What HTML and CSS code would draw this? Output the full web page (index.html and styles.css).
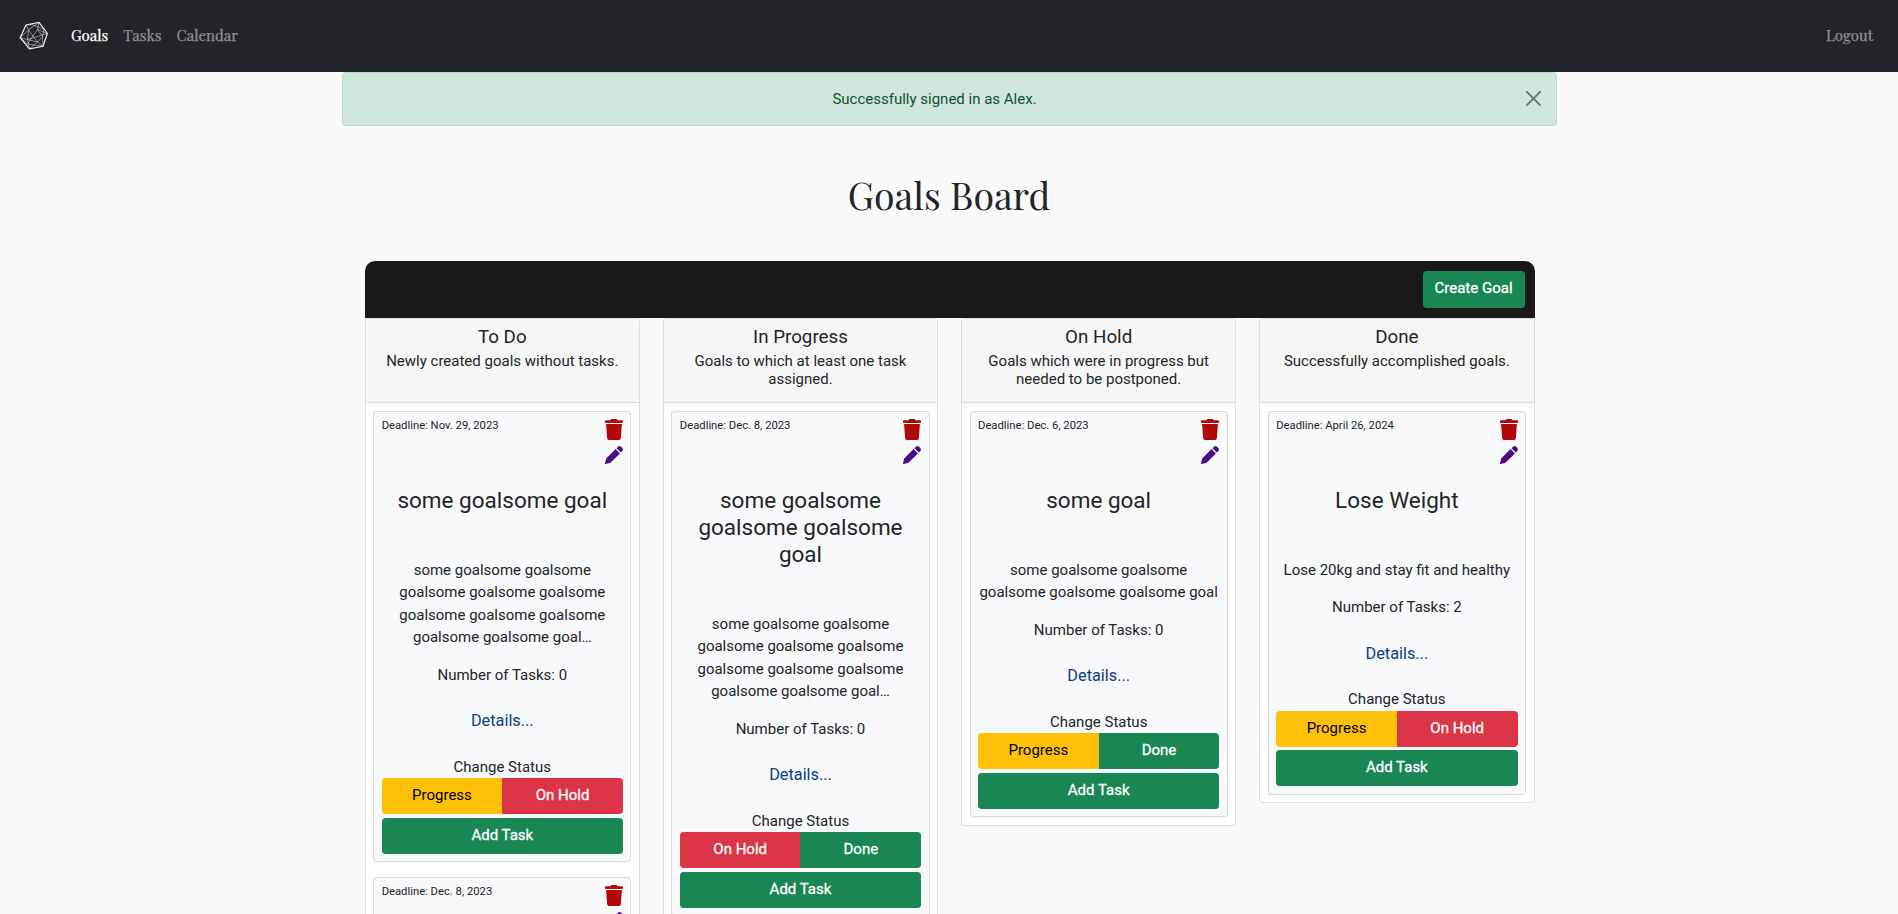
FILE: index.html
```html
<!DOCTYPE html>
<html lang="en">
<head>
<meta charset="utf-8">
<title>Goals Board</title>
<link rel="stylesheet" href="styles.css">
</head>
<body>
<svg class="sprite" aria-hidden="true">
  <symbol id="trash" viewBox="0 0 18 21"><path d="M0 1.9Q0 1.3.6 1.3H5.2L6 .4Q6.2.1 6.6.1H11.4Q11.8.1 12 .4L12.8 1.3H17.4Q18 1.3 18 1.9V3.2Q18 3.9 17.4 3.9H.6Q0 3.9 0 3.2ZM1.1 5.1H16.9L15.9 19.1Q15.7 21 14 21H4Q2.3 21 2.1 19.1Z"/></symbol>
  <symbol id="pencil" viewBox="0 0 18 18"><path d="M10.6 3.1 14.9 7.4 6 16.2Q5.5 16.7 4.8 16.9L.6 18Q-.1 18.1 0 17.4L1 13.2Q1.2 12.5 1.7 12ZM11.5 2.2 13 .7Q14.5-.6 16 .7L17.3 2Q18.6 3.5 17.3 5L15.8 6.5Z"/></symbol>
</svg>
<nav class="navbar">
  <svg class="logo" viewBox="0 0 30 30" fill="none" stroke="#f2f2f2">
    <path stroke-width="1.15" d="M7 4 20 1.5 28.4 12.5 24 25.3 10.5 27.8 1.2 16.7Z"/>
    <path stroke-width=".7" opacity=".7" d="M7 4 13 3.5 25 8.5 23.5 15.5 24 25.3M20 1.5 9.5 9 1.2 16.7 8.5 18.5 10.5 27.8M7 4 9.5 9 8.5 18.5 18.5 21 23.5 15.5 18.5 8.5M20 1.5 18.5 8.5 28.4 12.5 8.5 18.5M18.5 21 24 25.3 8.5 23 1.2 16.7M9.5 9 18.5 21 10.5 27.8M18.5 8.5 8.5 23"/>
  </svg>
  <a class="nav-link active">Goals</a>
  <a class="nav-link">Tasks</a>
  <a class="nav-link">Calendar</a>
  <a class="nav-link logout">Logout</a>
</nav>
<div class="alert">
  <span class="alert-text">Successfully signed in as Alex.</span>
  <svg class="close" viewBox="0 0 16 16"><path d="M.3.3a1 1 0 0 1 1.4 0L8 6.6 14.3.3a1 1 0 1 1 1.4 1.4L9.4 8l6.3 6.3a1 1 0 0 1-1.4 1.4L8 9.4l-6.3 6.3a1 1 0 0 1-1.4-1.4L6.6 8 .3 1.7a1 1 0 0 1 0-1.4z"/></svg>
</div>
<h1 class="title">Goals Board</h1>
<main class="board">
  <div class="toolbar"><button class="btn green create">Create Goal</button></div>
  <div class="columns">
    <section class="column">
      <header class="column-head"><h5>To Do</h5><p>Newly created goals without tasks.</p></header>
      <article class="card">
        <div class="card-top"><span class="deadline">Deadline: Nov. 29, 2023</span><span class="actions"><svg class="trash"><use href="#trash"/></svg><svg class="pencil"><use href="#pencil"/></svg></span></div>
        <h4>some goalsome goal</h4>
        <p class="desc">some goalsome goalsome<br>goalsome goalsome goalsome<br>goalsome goalsome goalsome<br>goalsome goalsome goal…</p>
        <p class="count">Number of Tasks: 0</p>
        <a class="details">Details...</a>
        <div class="status">Change Status</div>
        <div class="group"><button class="btn yellow">Progress</button><button class="btn red">On Hold</button></div>
        <button class="btn green add">Add Task</button>
      </article>
      <article class="card">
        <div class="card-top"><span class="deadline">Deadline: Dec. 8, 2023</span><span class="actions"><svg class="trash"><use href="#trash"/></svg><svg class="pencil"><use href="#pencil"/></svg></span></div>
      </article>
    </section>
    <section class="column">
      <header class="column-head"><h5>In Progress</h5><p>Goals to which at least one task assigned.</p></header>
      <article class="card">
        <div class="card-top"><span class="deadline">Deadline: Dec. 8, 2023</span><span class="actions"><svg class="trash"><use href="#trash"/></svg><svg class="pencil"><use href="#pencil"/></svg></span></div>
        <h4>some goalsome<br>goalsome goalsome<br>goal</h4>
        <p class="desc">some goalsome goalsome<br>goalsome goalsome goalsome<br>goalsome goalsome goalsome<br>goalsome goalsome goal…</p>
        <p class="count">Number of Tasks: 0</p>
        <a class="details">Details...</a>
        <div class="status">Change Status</div>
        <div class="group"><button class="btn red">On Hold</button><button class="btn green">Done</button></div>
        <button class="btn green add">Add Task</button>
      </article>
    </section>
    <section class="column">
      <header class="column-head"><h5>On Hold</h5><p>Goals which were in progress but needed to be postponed.</p></header>
      <article class="card">
        <div class="card-top"><span class="deadline">Deadline: Dec. 6, 2023</span><span class="actions"><svg class="trash"><use href="#trash"/></svg><svg class="pencil"><use href="#pencil"/></svg></span></div>
        <h4>some goal</h4>
        <p class="desc">some goalsome goalsome<br>goalsome goalsome goalsome goal</p>
        <p class="count">Number of Tasks: 0</p>
        <a class="details">Details...</a>
        <div class="status">Change Status</div>
        <div class="group"><button class="btn yellow">Progress</button><button class="btn green">Done</button></div>
        <button class="btn green add">Add Task</button>
      </article>
    </section>
    <section class="column">
      <header class="column-head"><h5>Done</h5><p>Successfully accomplished goals.</p></header>
      <article class="card">
        <div class="card-top"><span class="deadline">Deadline: April 26, 2024</span><span class="actions"><svg class="trash"><use href="#trash"/></svg><svg class="pencil"><use href="#pencil"/></svg></span></div>
        <h4>Lose Weight</h4>
        <p class="desc">Lose 20kg and stay fit and healthy</p>
        <p class="count">Number of Tasks: 2</p>
        <a class="details">Details...</a>
        <div class="status">Change Status</div>
        <div class="group"><button class="btn yellow">Progress</button><button class="btn red">On Hold</button></div>
        <button class="btn green add">Add Task</button>
      </article>
    </section>
  </div>
</main>
</body>
</html>
```

FILE: styles.css
```css
* { box-sizing: border-box; }
html { font-size: 15px; }
body {
  margin: 0;
  height: 914px;
  overflow: hidden;
  background: #fafafa;
  color: #212529;
  font-family: Roboto, sans-serif;
  font-size: 1rem;
  line-height: 1.5;
}
h1, h4, h5, p { margin: 0; font-weight: 400; line-height: 1.2; }
.sprite { display: none; }

.navbar {
  display: flex;
  align-items: center;
  height: 72px;
  padding: 0 25px 0 19px;
  background: #212529;
  font-family: "Playfair Display", "Liberation Serif", serif;
}
.logo { width: 30px; height: 30px; margin-right: 22px; }
.nav-link {
  margin: -1px 15px 0 0;
  color: #909294;
  font-size: 15px;
  -webkit-text-stroke: .25px currentColor;
}
.nav-link.active { color: #fff; }
.nav-link.logout { margin: -1px 0 0 auto; }

.alert {
  display: flex;
  align-items: center;
  width: 1215px;
  height: 54px;
  margin-left: 342px;
  padding: 0 15px;
  border: 1px solid #badbcc;
  border-radius: .25rem;
  background: #d1e7dd;
  color: #0f5132;
}
.alert-text { flex: 1; text-align: center; }
.close { width: 15px; height: 15px; margin: -1px 0 0 15px; fill: #000; opacity: .5; }

.title {
  margin-top: 44px;
  height: 48px;
  text-align: center;
  font-family: "Playfair Display", "Liberation Serif", serif;
  font-size: 2.5rem;
  line-height: 48px;
}

.board { width: 1169.9px; margin: 43px 0 0 364.65px; }
.toolbar {
  display: flex;
  justify-content: flex-end;
  height: 57px;
  padding: 10px;
  border-radius: 10px 10px 0 0;
  background: #191919;
}
.columns {
  display: grid;
  grid-template-columns: repeat(4, 275.3px);
  column-gap: 22.9px;
  align-items: start;
}
.column {
  border: 1px solid rgba(0, 0, 0, .125);
  border-radius: .25rem;
  background: #fff;
  padding-bottom: .5rem;
}
.column-head {
  height: 84px;
  padding: 7px 1rem 0;
  border-bottom: 1px solid rgba(0, 0, 0, .125);
  background: #f7f7f7;
  text-align: center;
}
.column-head h5 { font-size: 1.25rem; margin-bottom: 3px; }
.column-head p { line-height: 18.3px; }

.card {
  margin: 8px .5rem 0;
  padding: .5rem;
  border: 1px solid rgba(0, 0, 0, .125);
  border-radius: .25rem;
  background: #f8f9fa;
  text-align: center;
}
.card + .card { margin-top: 15px; }
.card-top { display: flex; justify-content: space-between; height: 67px; }
.deadline { font-size: 11.25px; line-height: 12px; }
.actions { display: flex; flex-direction: column; gap: 6px; margin-top: -1px; }
.trash { width: 18px; height: 21px; fill: #b10909; }
.pencil { width: 18px; height: 18px; fill: #4b0b86; }
h4 { font-size: 1.5rem; margin-bottom: 45px; }
.desc, .count { line-height: 22.5px; margin-bottom: 15px; }
.details {
  display: block;
  margin: 23px 0 22.5px;
  color: #0a3d86;
  font-size: 16.3px;
  line-height: 24px;
}
.status { line-height: 22.5px; }
.btn {
  height: 36px;
  padding: 0 12px 1px;
  border: 0;
  border-radius: .25rem;
  font: 400 15px/1.5 Roboto, sans-serif;
  color: #fff;
  -webkit-text-stroke: .3px currentColor;
}
.create { height: 37px; padding-bottom: 3px; }
.green { background: #198754; }
.red { background: #dc3545; }
.yellow { background: #ffc107; color: #000; -webkit-text-stroke: 0; }
.group { display: flex; }
.group .btn { flex: 1; }
.group .btn:first-child { border-radius: .25rem 0 0 .25rem; }
.group .btn:last-child { border-radius: 0 .25rem .25rem 0; }
.add { display: block; width: 100%; margin-top: 3.7px; }
```
